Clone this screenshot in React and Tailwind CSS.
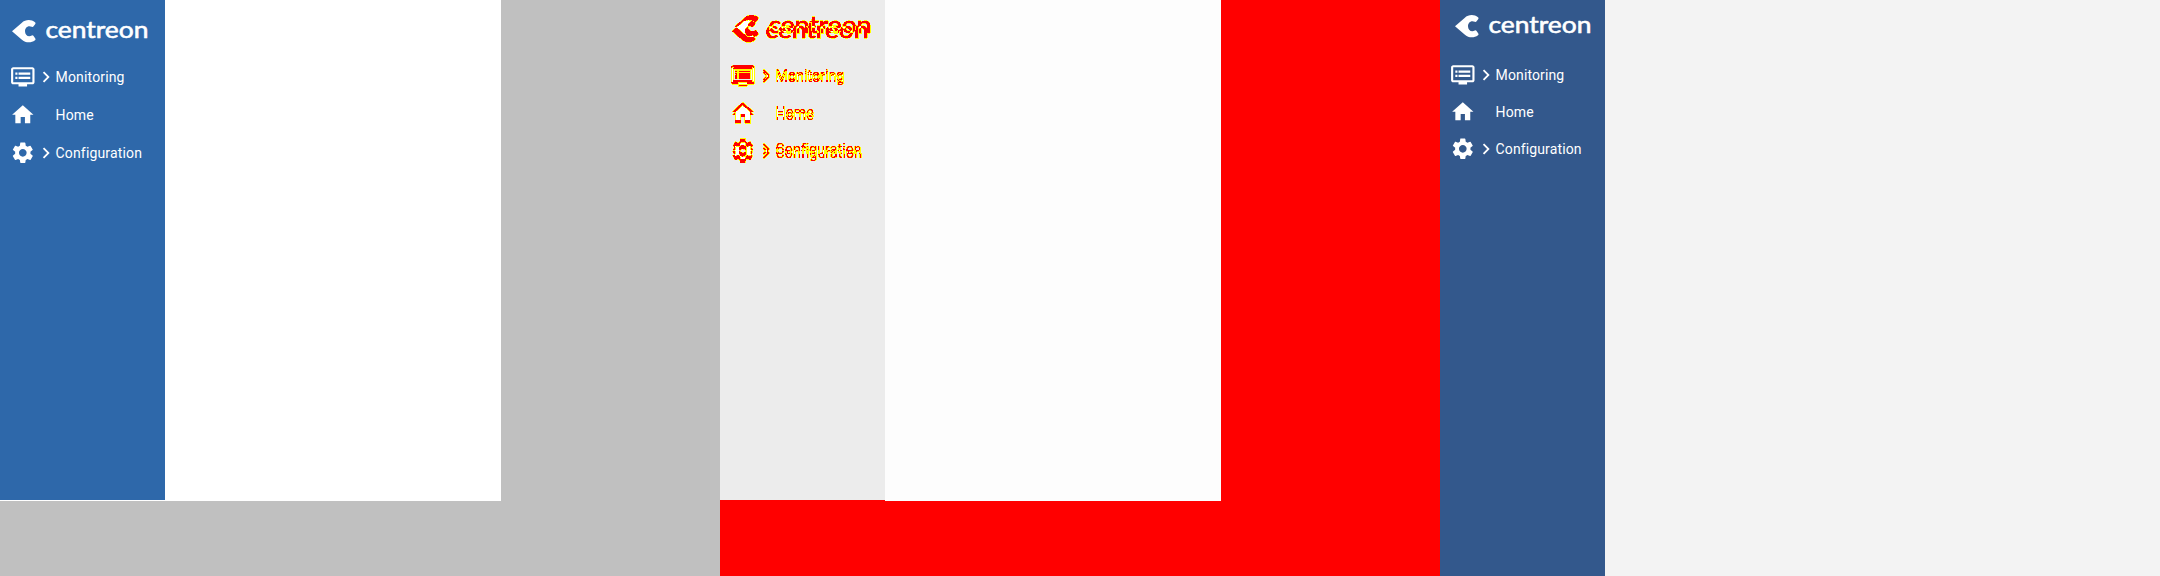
import { MdDvr, MdHome, MdSettings, MdChevronRight } from 'react-icons/md';

function Logo({ className }) {
  return (
    <svg className={className} width="150" height="34" viewBox="0 0 150 34" fill="none">
      <path
        d="M12 16.2L21.6 8C25.5 4.4 31 4.2 35 7.2Q36 8 35.3 9L33.4 11.6Q32.6 12.4 31.8 11.8C28 10 25 12.6 25 16.2C25 20 28 22.4 31.8 20.6Q32.6 20 33.4 20.8L35.3 23.4Q36 24.4 35 25.2C31 28.2 25.5 28 21.6 24.4Z"
        fill="currentColor"
      />
      <text
        x="45.4"
        y="22.8"
        fill="currentColor"
        stroke="currentColor"
        strokeWidth="0.6"
        strokeLinejoin="round"
        fontFamily="Lato, sans-serif"
        fontWeight="400"
        fontSize="24"
        textLength="103"
        lengthAdjust="spacingAndGlyphs"
      >
        centreon
      </text>
    </svg>
  );
}

function Item({ icon: Icon, label, arrow, row, text }) {
  return (
    <li className={`flex items-center pl-[10px] ${row}`}>
      <Icon className="size-[25.6px] shrink-0" />
      <span className="flex w-5 shrink-0 justify-center">
        {arrow && <MdChevronRight className="size-[22px] shrink-0" />}
      </span>
      <span className={`leading-5 ${text}`}>{label}</span>
    </li>
  );
}

function Nav({ variant, className = '' }) {
  const old = variant === 'baseline';
  const row = old ? 'h-[38px]' : 'h-[37px]';
  const text = old ? 'text-[14px] tracking-[0.15px]' : 'text-[14px] tracking-[0.12px]';
  return (
    <nav className={`w-[165px] shrink-0 font-['Roboto',sans-serif] text-white ${className}`}>
      <div className={old ? 'h-[58px] pt-[15px]' : 'h-[56px] pt-[10px] pl-[3px]'}>
        <Logo className="block" />
      </div>
      <ul>
        <Item icon={MdDvr} label="Monitoring" arrow row={row} text={text} />
        <Item icon={MdHome} label="Home" row={row} text={text} />
        <Item icon={MdSettings} label="Configuration" arrow row={row} text={text} />
      </ul>
    </nav>
  );
}

function DiffFilter() {
  return (
    <svg width="0" height="0" className="absolute">
      <filter id="diff" colorInterpolationFilters="sRGB" x="0" y="0" width="1" height="1">
        <feColorMatrix type="matrix" values="0 0 0 0 1  1 0 0 0 0  0 0 0 0 0  1 0 0 0 0" />
        <feComponentTransfer>
          <feFuncG type="discrete" tableValues="1 1 1 1 1 1 0 0 0 0" />
          <feFuncA type="discrete" tableValues="0 1 1 1 1 1 1 1 1 1 1 1 1 1 1 1 1 1 1 1" />
        </feComponentTransfer>
      </filter>
    </svg>
  );
}

export default function App() {
  return (
    <main className="flex h-[576px] w-[2160px] overflow-hidden">
      <section className="h-full w-[720px] bg-[#c0c0c0]">
        <div className="h-[501px] w-[501px] bg-white">
          <Nav variant="baseline" className="h-[500px] bg-[#2e68aa]" />
        </div>
      </section>

      <section className="h-full w-[720px] bg-[#ff0000]">
        <DiffFilter />
        <div className="flex h-[501px] w-[501px] bg-[#fdfdfd]">
          <div className="relative h-[501px] w-[165px] bg-[linear-gradient(#ececec_500px,#ff0000_500px)]">
            <Nav variant="baseline" className="absolute inset-0 h-[500px]" />
            <div className="absolute inset-0 isolate h-[500px] bg-black [filter:url(#diff)]">
              <Nav variant="baseline" className="absolute inset-0" />
              <Nav variant="current" className="absolute inset-0 mix-blend-difference" />
            </div>
          </div>
        </div>
      </section>

      <section className="h-full w-[720px] bg-[#f3f3f3]">
        <Nav variant="current" className="h-full bg-[#33588c]" />
      </section>
    </main>
  );
}
